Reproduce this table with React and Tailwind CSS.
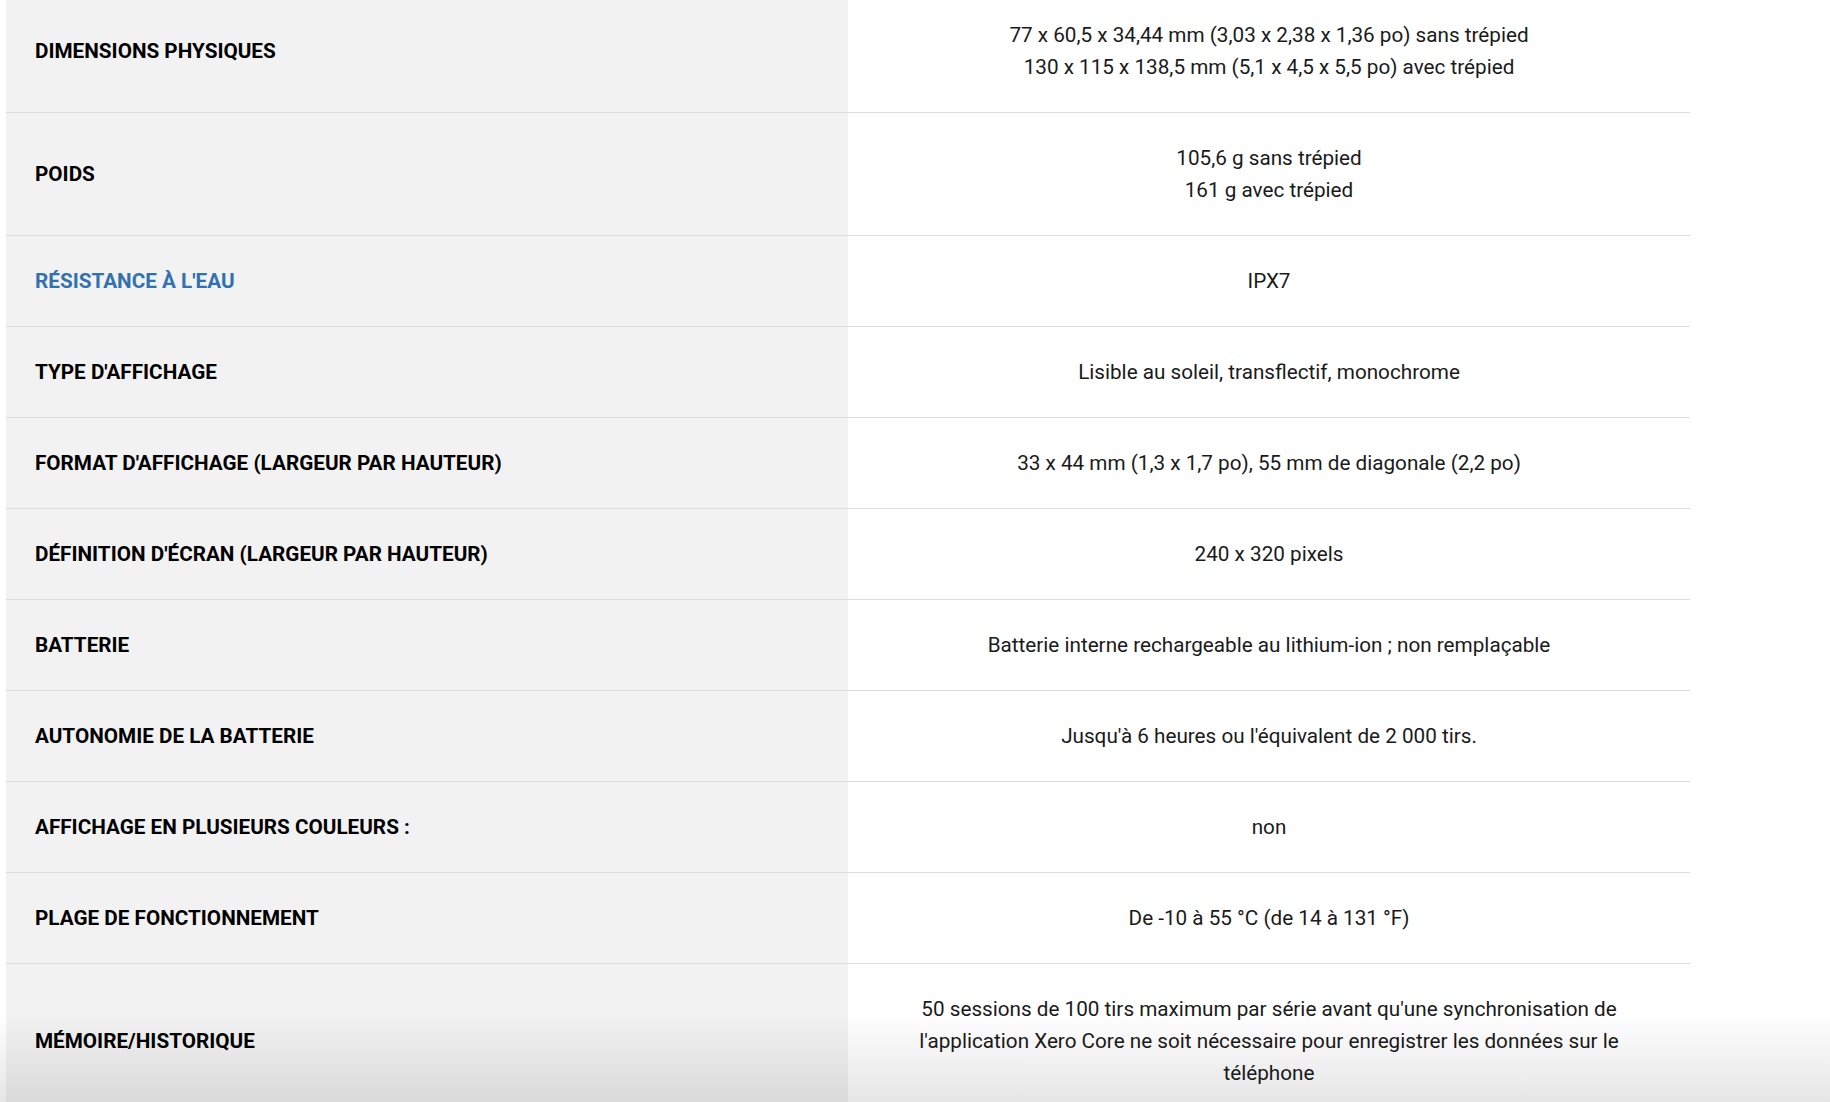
import React from "react";

const specs = [
  {
    label: "DIMENSIONS PHYSIQUES",
    value: [
      "77 x 60,5 x 34,44 mm (3,03 x 2,38 x 1,36 po) sans trépied",
      "130 x 115 x 138,5 mm (5,1 x 4,5 x 5,5 po) avec trépied",
    ],
  },
  { label: "POIDS", value: ["105,6 g sans trépied", "161 g avec trépied"] },
  { label: "RÉSISTANCE À L'EAU", value: ["IPX7"], link: true },
  { label: "TYPE D'AFFICHAGE", value: ["Lisible au soleil, transflectif, monochrome"] },
  {
    label: "FORMAT D'AFFICHAGE (LARGEUR PAR HAUTEUR)",
    value: ["33 x 44 mm (1,3 x 1,7 po), 55 mm de diagonale (2,2 po)"],
  },
  { label: "DÉFINITION D'ÉCRAN (LARGEUR PAR HAUTEUR)", value: ["240 x 320 pixels"] },
  {
    label: "BATTERIE",
    value: ["Batterie interne rechargeable au lithium-ion ; non remplaçable"],
  },
  {
    label: "AUTONOMIE DE LA BATTERIE",
    value: ["Jusqu'à 6 heures ou l'équivalent de 2 000 tirs."],
  },
  { label: "AFFICHAGE EN PLUSIEURS COULEURS :", value: ["non"] },
  { label: "PLAGE DE FONCTIONNEMENT", value: ["De -10 à 55 °C (de 14 à 131 °F)"] },
  {
    label: "MÉMOIRE/HISTORIQUE",
    value: [
      "50 sessions de 100 tirs maximum par série avant qu'une synchronisation de l'application Xero Core ne soit nécessaire pour enregistrer les données sur le téléphone",
    ],
  },
];

export default function App() {
  return (
    <div className="relative h-[1102px] overflow-hidden bg-white font-['Roboto','Liberation_Sans',sans-serif]">
      <div className="-mt-[10px] ml-[6px] w-[1684px]">
        {specs.map((row, idx) => (
          <div key={idx} className="grid grid-cols-2 border-b border-[#dddddd]">
            <div className="flex items-center bg-[#f2f2f2] px-[29px] py-[29px]">
              <span
                className={
                  "text-[20.7px] font-bold leading-[32px] " +
                  (row.link ? "text-[#3271b0]" : "text-black")
                }
              >
                {row.label}
              </span>
            </div>
            <div className="flex flex-col items-center justify-center px-[60px] py-[29px] text-center text-[20.7px] leading-[32px] text-[#1a1a1a]">
              {row.value.map((line, i) => (
                <div key={i}>{line}</div>
              ))}
            </div>
          </div>
        ))}
      </div>
      <div className="pointer-events-none absolute inset-x-0 bottom-0 h-[90px] bg-gradient-to-b from-transparent to-black/10" />
    </div>
  );
}
